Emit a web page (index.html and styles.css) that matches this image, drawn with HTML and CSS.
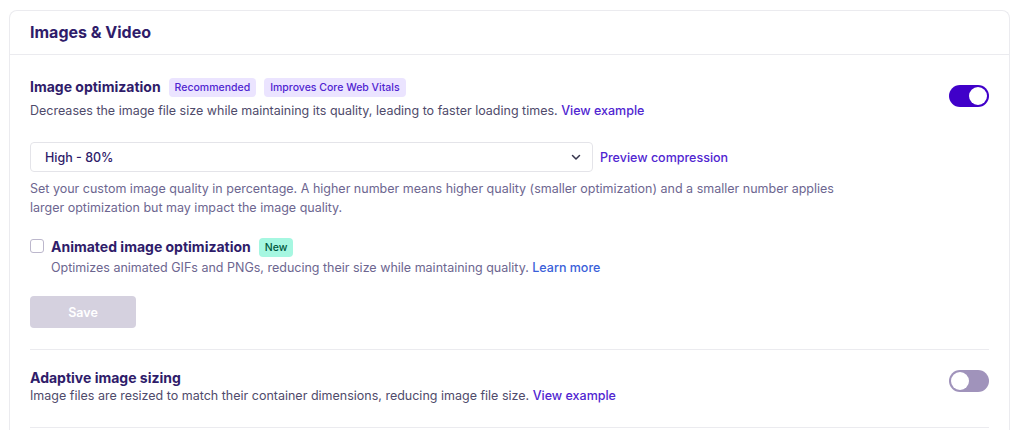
FILE: index.html
```html
<!DOCTYPE html>
<html lang="en">
<head>
    <meta charset="UTF-8">
    <meta name="viewport" content="width=device-width, initial-scale=1.0">
    <title>Images &amp; Video</title>
    <link rel="stylesheet" href="styles.css">
</head>
<body>
    <div class="card">
        <div class="card-header">Images &amp; Video</div>

        <div class="card-body">
            <div class="setting">
                <div class="setting-text">
                    <div class="setting-title">
                        <span>Image optimization</span>
                        <span class="badge badge-purple">Recommended</span>
                        <span class="badge badge-purple">Improves Core Web Vitals</span>
                    </div>
                    <p class="setting-desc">Decreases the image file size while maintaining its quality, leading to faster loading times. <a href="#" class="link">View example</a></p>
                </div>
                <label class="switch">
                    <input type="checkbox" checked>
                    <span class="slider"></span>
                </label>
            </div>

            <div class="quality-row">
                <div class="select">
                    <span>High - 80%</span>
                    <svg width="12" height="12" viewBox="0 0 12 12"><path d="M2.5 4.5 6 8l3.5-3.5" fill="none" stroke="#36344d" stroke-width="1.5" stroke-linecap="round" stroke-linejoin="round"/></svg>
                </div>
                <a href="#" class="link">Preview compression</a>
            </div>
            <p class="hint">Set your custom image quality in percentage. A higher number means higher quality (smaller optimization) and a smaller number applies larger optimization but may impact the image quality.</p>

            <div class="check-row">
                <span class="checkbox"></span>
                <div>
                    <div class="setting-title">
                        <span>Animated image optimization</span>
                        <span class="badge badge-green">New</span>
                    </div>
                    <p class="hint">Optimizes animated GIFs and PNGs, reducing their size while maintaining quality. <a href="#" class="link link-blue">Learn more</a></p>
                </div>
            </div>

            <button class="save" disabled>Save</button>

            <div class="setting setting-split">
                <div class="setting-text">
                    <div class="setting-title"><span>Adaptive image sizing</span></div>
                    <p class="setting-desc">Image files are resized to match their container dimensions, reducing image file size. <a href="#" class="link">View example</a></p>
                </div>
                <label class="switch">
                    <input type="checkbox">
                    <span class="slider"></span>
                </label>
            </div>
            <div class="divider"></div>
        </div>
    </div>
</body>
</html>
```

FILE: styles.css
```css
body {
    font-family: Inter, "Noto Sans", sans-serif;
    background-color: #ffffff;
    margin: 0;
    padding: 10px 14px 0 9px;
    color: #2f1c6a;
}

p {
    margin: 0;
}

.card {
    border: 1px solid #ebebef;
    border-bottom: none;
    border-radius: 8px 8px 0 0;
    height: 420px;
    overflow: hidden;
}

.card-header {
    font-size: 16px;
    font-weight: 700;
    height: 43px;
    line-height: 43px;
    padding: 0 20px;
    border-bottom: 1px solid #ebebef;
}

.card-body {
    padding: 21px 20px 0 20px;
}

.setting {
    display: flex;
    align-items: flex-start;
    justify-content: space-between;
}

.setting-title {
    display: flex;
    align-items: center;
    gap: 8px;
    font-size: 14px;
    font-weight: 700;
    line-height: 22px;
}

.badge {
    font-size: 10.5px;
    font-weight: 500;
    line-height: 19px;
    padding: 0 6px;
    border-radius: 4px;
}

.badge-purple {
    background-color: #ebe4ff;
    color: #5025d1;
}

.badge-green {
    background-color: #a6f7e1;
    color: #00573d;
}

.setting-desc {
    font-size: 12.5px;
    line-height: 22px;
    margin-top: 2px;
    color: #4f4b6b;
}

.link {
    color: #5025d1;
    font-weight: 500;
    text-decoration: none;
}

.link-blue {
    color: #3a5fd9;
}

.switch {
    position: relative;
    width: 40px;
    height: 22px;
    margin-top: 9px;
    flex-shrink: 0;
}

.switch input {
    display: none;
}

.slider {
    position: absolute;
    inset: 0;
    border-radius: 11px;
    background-color: #a093bb;
}

.slider::after {
    content: "";
    position: absolute;
    top: 2px;
    left: 2px;
    width: 18px;
    height: 18px;
    border-radius: 50%;
    background-color: #ffffff;
}

.switch input:checked + .slider {
    background-color: #4000c9;
}

.switch input:checked + .slider::after {
    left: 20px;
}

.quality-row {
    display: flex;
    align-items: center;
    gap: 7px;
    margin-top: 20px;
}

.select {
    width: 563px;
    height: 30px;
    box-sizing: border-box;
    border: 1px solid #e4e4e9;
    border-radius: 4px;
    padding: 0 10px 0 14px;
    display: flex;
    align-items: center;
    justify-content: space-between;
    font-size: 12.5px;
    font-weight: 500;
    color: #2f1c6a;
}

.quality-row .link {
    font-size: 12.5px;
}

.hint {
    font-size: 12.5px;
    line-height: 19px;
    color: #6d6690;
    max-width: 830px;
}

.quality-row + .hint {
    margin-top: 7px;
}

.check-row {
    display: flex;
    gap: 7px;
    margin-top: 19px;
}

.checkbox {
    width: 14px;
    height: 14px;
    box-sizing: border-box;
    border: 1.5px solid #bcb7cc;
    border-radius: 3px;
    margin-top: 3px;
    flex-shrink: 0;
}

.check-row .hint {
    margin-top: 0;
}

.save {
    margin-top: 19px;
    width: 106px;
    height: 32px;
    border: none;
    border-radius: 4px;
    background-color: #d5d1df;
    color: #ffffff;
    font-family: inherit;
    font-size: 12.5px;
    font-weight: 600;
}

.setting-split {
    margin-top: 21px;
    border-top: 1px solid #ebebef;
    padding-top: 19px;
    padding-bottom: 22px;
}

.setting-split .setting-title {
    line-height: 18px;
}

.setting-split .setting-desc {
    line-height: 18px;
    margin-top: 0;
}

.setting-split .switch {
    margin-top: 1px;
}

.divider {
    border-top: 1px solid #ebebef;
}
```
